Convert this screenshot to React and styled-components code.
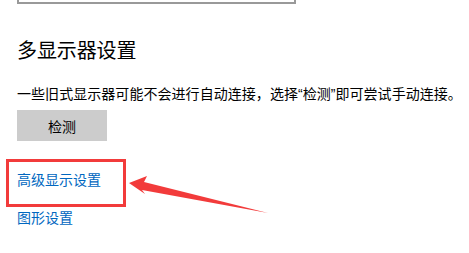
import React from 'react'
import styled, {createGlobalStyle} from 'styled-components'

const GlobalStyle = createGlobalStyle`
  html, body {
    margin: 0;
    padding: 0;
    background: #ffffff;
  }
  body {
    font-family: "Noto Sans CJK SC", "Noto Sans", sans-serif;
    color: #000000;
  }
`

const Page = styled.div`
  position: relative;
  width: 469px;
  height: 253px;
  overflow: hidden;
  padding-left: 17px;
  box-sizing: border-box;
  display: flex;
  flex-direction: column;
  align-items: flex-start;
`

const TopBox = styled.div`
  width: 275px;
  height: 2px;
  border: 2px solid #999999;
  border-top: none;
`

const Heading = styled.h2`
  margin: 32px 0 0 0;
  font-size: 20px;
  line-height: 28px;
  font-weight: 400;
  letter-spacing: -0.1px;
`

const Description = styled.p`
  margin: 19px 0 0 0;
  font-size: 14px;
  line-height: 20px;
  white-space: nowrap;
  letter-spacing: 0.05px;
`

// narrow curly quotes, like the system UI font draws them
const Quote = styled.span`
  font-family: "Liberation Sans", sans-serif;
  letter-spacing: 0;
`

const Button = styled.button`
  margin-top: 6px;
  width: 90px;
  height: 31px;
  border: none;
  background: #cccccc;
  font-family: inherit;
  font-size: 14px;
  color: #000000;
  padding: 0;
`

const Link = styled.a`
  margin-top: ${p => p.gap}px;
  font-size: 14px;
  line-height: 20px;
  color: #0067c0;
  text-decoration: none;
`

const Highlight = styled.div`
  position: absolute;
  left: 6px;
  top: 159px;
  width: 120px;
  height: 48px;
  box-sizing: border-box;
  border: 3px solid #f23b3b;
`

const Arrow = styled.svg`
  position: absolute;
  left: 0;
  top: 0;
  pointer-events: none;
`

export default function App() {
  return (
    <>
      <GlobalStyle />
      <Page>
        <TopBox />
        <Heading>多显示器设置</Heading>
        <Description>
          一些旧式显示器可能不会进行自动连接，选择<Quote>“</Quote>检测<Quote>”</Quote>即可尝试手动连接。
        </Description>
        <Button>检测</Button>
        <Link gap={28}>高级显示设置</Link>
        <Link gap={18}>图形设置</Link>
        <Highlight />
        <Arrow width="469" height="253" viewBox="0 0 469 253">
          <polygon
            points="129,183 147,176 144,182 268,213 142,190 145,194"
            fill="#f23b3b"
          />
        </Arrow>
      </Page>
    </>
  )
}
